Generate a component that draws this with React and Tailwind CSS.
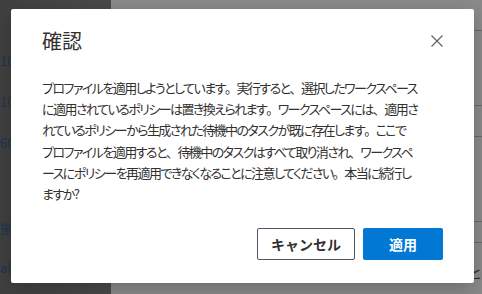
import React from 'react';

const lines = [
  'プロファイルを適用しようとしています。実行すると、選択したワークスペース',
  'に適用されているポリシーは置き換えられます。ワークスペースには、適用さ',
  'れているポリシーから生成された待機中のタスクが既に存在します。ここで',
  'プロファイルを適用すると、待機中のタスクはすべて取り消され、ワークスペ',
  'ースにポリシーを再適用できなくなることに注意してください。本当に続行し',
  'ますか?',
];

const sideItems = [
  { text: '10.0.0.1', top: 'mt-[52px]' },
  { text: '10.0.0.2', top: 'mt-[23px]' },
  { text: '60 min', top: 'mt-[23px]' },
  { text: '揃えます', top: 'mt-[67px]' },
  { text: 'alt', top: 'mt-[22px]' },
];

// keep 。 and 、 full width, as in the original font
function Line({ text }) {
  const parts = text.split(/([。、])/);
  return (
    <div className="whitespace-nowrap">
      {parts.map((p, i) =>
        p === '。' || p === '、' ? (
          <span key={i} style={{ fontFeatureSettings: 'normal' }}>{p}</span>
        ) : (
          <span key={i}>{p}</span>
        )
      )}
    </div>
  );
}

export default function App() {
  return (
    <div
      className="relative w-[482px] h-[294px] overflow-hidden"
      style={{ fontFamily: '"Noto Sans CJK JP", "Noto Sans", sans-serif' }}
    >
      {/* Page behind the overlay */}
      <div className="flex w-full h-full">
        <div className="w-[132px] h-full bg-gradient-to-r from-[#404040] to-[#4a4a4a] flex flex-col">
          {sideItems.map((item) => (
            <div
              key={item.text}
              className={`${item.top} h-[18px] text-[13px] leading-[18px] text-[#1e3552] whitespace-nowrap`}
            >
              {item.text}
            </div>
          ))}
        </div>
        <div className="flex-1 h-full bg-[#8a8a8a] flex flex-col">
          <div className="mt-[30px] h-px bg-[#6a6a6a]" />
          <div className="mt-[74px] h-px bg-[#6a6a6a]" />
          <div className="mt-[30px] h-px bg-[#6a6a6a]" />
          <div className="mt-[84px] h-px bg-[#6a6a6a]" />
          <div className="mt-[20px] h-px bg-[#6a6a6a]" />
          <div className="mt-[22px] pl-[100px] text-[13px] leading-[16px] text-[#2a2a2a] whitespace-nowrap">
            がワークスペースに適用されているポリシーと
          </div>
        </div>
      </div>

      {/* Dialog */}
      <div className="absolute left-[11px] top-[9px] w-[463px] h-[274px] bg-white rounded-[2px] shadow-[0_6px_20px_rgba(0,0,0,0.22)] flex flex-col px-[31px] pt-[18px]">
        <div className="flex items-center justify-between h-[28px]">
          <h2 className="text-[20px] leading-[28px] text-[#323130] font-normal">確認</h2>
          <button className="w-[20px] h-[20px] flex items-center justify-center -mr-[4px]">
            <svg width="12" height="12" viewBox="0 0 12 12" fill="none">
              <path d="M0.5 0.5L11.5 11.5M11.5 0.5L0.5 11.5" stroke="#605e5c" strokeWidth="1.1" />
            </svg>
          </button>
        </div>

        <div
          className="mt-[22px] text-[13px] leading-[21.2px] tracking-[-1.55px] text-[#323130]"
          style={{ fontFeatureSettings: '"palt"' }}
        >
          {lines.map((l) => (
            <Line key={l} text={l} />
          ))}
        </div>

        <div className="mt-auto mb-[23px] flex justify-end gap-[8px]">
          <button className="w-[98px] h-[32px] border border-[#4b5563] rounded-[2px] bg-white text-[14px] font-semibold text-[#323130]">
            キャンセル
          </button>
          <button className="w-[80px] h-[32px] rounded-[2px] bg-[#0078d4] text-[14px] font-semibold text-white">
            適用
          </button>
        </div>
      </div>
    </div>
  );
}
